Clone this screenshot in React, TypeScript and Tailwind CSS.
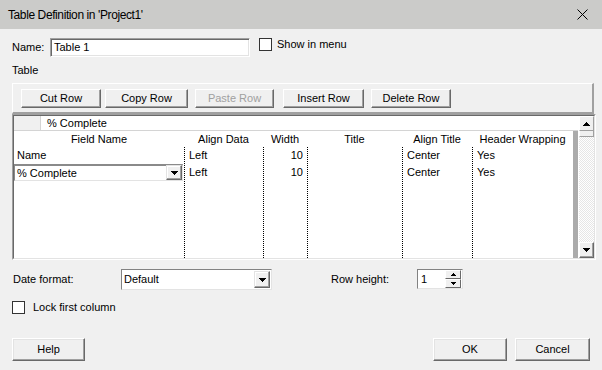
import React from "react";

const F = { fontFamily: '"Liberation Sans", Arial, sans-serif' };

const Tri = ({ up = false }: { up?: boolean }) => (
  <svg width="7" height="4" viewBox="0 0 7 4" shapeRendering="crispEdges" style={up ? { transform: "scaleY(-1)" } : undefined}>
    <path d="M0 0h7v1H0z M1 1h5v1H1z M2 2h3v1H2z M3 3h1v1H3z" fill="#000" />
  </svg>
);

const SmallTri = ({ up = false }: { up?: boolean }) => (
  <svg width="5" height="3" viewBox="0 0 5 3" shapeRendering="crispEdges" style={up ? { transform: "scaleY(-1)" } : undefined}>
    <path d="M0 0h5v1H0z M1 1h3v1H1z M2 2h1v1H2z" fill="#000" />
  </svg>
);

const ToolBtn = ({ label, w, ml, disabled = false }: { label: string; w: string; ml: string; disabled?: boolean }) => (
  <div
    className={`${w} ${ml} h-[19px] flex items-center justify-center bg-[#f0f0f0] border-t border-l border-t-white border-l-white border-r border-b border-r-[#696969] border-b-[#696969] shadow-[inset_-1px_-1px_0_#a0a0a0] ${disabled ? "text-[#a0a0a0]" : "text-black"}`}
  >
    {label}
  </div>
);

const DlgBtn = ({ label, cls }: { label: string; cls: string }) => (
  <div
    className={`${cls} h-[23px] flex items-center justify-center bg-[#f0f0f0] border-t border-l border-t-white border-l-white border-r border-b border-r-[#696969] border-b-[#696969] shadow-[inset_-1px_-1px_0_#a0a0a0,inset_1px_1px_0_#e3e3e3]`}
  >
    {label}
  </div>
);

const DropBtn = ({ cls }: { cls: string }) => (
  <div
    className={`${cls} flex items-center justify-center bg-[#f0f0f0] border-t border-l border-t-[#e3e3e3] border-l-[#e3e3e3] border-r border-b border-r-[#696969] border-b-[#696969] shadow-[inset_-1px_-1px_0_#a0a0a0,inset_1px_1px_0_#fff]`}
  >
    <Tri />
  </div>
);

export default function App() {
  return (
    <div className="w-[602px] h-[370px] bg-[#f0f0f0] flex flex-col overflow-hidden text-[11px] text-black" style={F}>
      {/* Title bar */}
      <div className="h-[29px] bg-[#cbcbc9] flex items-center justify-between pl-[8px] pr-[14px] shrink-0">
        <span className="text-[12px] tracking-[-0.4px]">Table Definition in 'Project1'</span>
        <svg width="11" height="11" viewBox="0 0 11 11">
          <path d="M0.5 0.5L10.5 10.5M10.5 0.5L0.5 10.5" stroke="#000" strokeWidth="1" />
        </svg>
      </div>

      <div className="flex flex-col px-3">
        {/* Name row */}
        <div className="mt-[9px] h-[19px] flex items-start">
          <div className="w-[38px] h-[19px] flex items-center">Name:</div>
          <div className="w-[200px] h-[19px] bg-white border-t border-l border-t-[#a0a0a0] border-l-[#a0a0a0] border-r border-b border-r-white border-b-white shadow-[inset_1px_1px_0_#696969,inset_-1px_-1px_0_#e3e3e3] flex items-center pl-[3px]">
            Table 1
          </div>
          <div className="ml-[9px] flex items-center h-[13px]">
            <div className="w-[13px] h-[13px] bg-white border border-[#333]" />
            <span className="ml-[5px]">Show in menu</span>
          </div>
        </div>

        {/* Table label */}
        <div className="mt-[7px] h-[13px] leading-[13px]">Table</div>

        {/* Table group */}
        <div className="mt-[6px] w-[584px] flex flex-col">
          {/* Toolbar */}
          <div className="w-[582px] h-[31px] bg-[#f0f0f0] border-t border-l border-t-white border-l-white border-r-2 border-b-2 border-r-[#a0a0a0] border-b-[#a0a0a0] flex items-start pt-[5px]">
            <ToolBtn label="Cut Row" w="w-[80px]" ml="ml-[8px]" />
            <ToolBtn label="Copy Row" w="w-[83px]" ml="ml-[4px]" />
            <ToolBtn label="Paste Row" w="w-[79px]" ml="ml-[7px]" disabled />
            <ToolBtn label="Insert Row" w="w-[81px]" ml="ml-[9px]" />
            <ToolBtn label="Delete Row" w="w-[80px]" ml="ml-[7px]" />
          </div>

          {/* Grid */}
          <div className="h-[146px] border border-t-[#a0a0a0] border-l-[#a0a0a0] border-r-white border-b-white">
            <div className="h-full border border-t-[#696969] border-l-[#696969] border-r-[#e3e3e3] border-b-[#e3e3e3] flex">
              <div className="w-[564px] flex flex-col">
                {/* Edit row */}
                <div className="h-[15px] flex bg-white border-b border-b-[#d4d4d4]">
                  <div className="w-[27px] bg-[#f0f0f0] border-r border-r-[#d4d4d4]" />
                  <div className="pl-[6px] leading-[14px]">% Complete</div>
                </div>
                <div className="flex-1 flex">
                  <div className="w-[559px] bg-white flex flex-col">
                    {/* Header */}
                    <div className="h-[16px] grid grid-cols-[170px_79px_44px_95px_70px_101px] leading-[16px] text-center">
                      <div>Field Name</div>
                      <div>Align Data</div>
                      <div>Width</div>
                      <div>Title</div>
                      <div>Align Title</div>
                      <div>Header Wrapping</div>
                    </div>
                    {/* Body */}
                    <div className="flex-1 flex">
                      <div className="w-[170px] flex flex-col">
                        <div className="h-[17px] leading-[17px] pl-[3px]">Name</div>
                        <div className="h-[17px] w-[169px] bg-white border-t-2 border-l border-t-[#8a8a8a] border-l-[#8a8a8a] border-r border-b border-r-[#e3e3e3] border-b-[#e3e3e3] flex items-center justify-between">
                          <span className="pl-[2px]">% Complete</span>
                          <DropBtn cls="w-[16px] h-[15px] mb-[1px]" />
                        </div>
                      </div>
                      <div className="w-[79px] border-l border-dotted border-black flex flex-col">
                        <div className="h-[17px] leading-[17px] pl-[4px]">Left</div>
                        <div className="h-[17px] leading-[17px] pl-[4px]">Left</div>
                      </div>
                      <div className="w-[44px] border-l border-dotted border-black flex flex-col text-right">
                        <div className="h-[17px] leading-[17px] pr-[4px]">10</div>
                        <div className="h-[17px] leading-[17px] pr-[4px]">10</div>
                      </div>
                      <div className="w-[95px] border-l border-dotted border-black" />
                      <div className="w-[70px] border-l border-dotted border-black flex flex-col">
                        <div className="h-[17px] leading-[17px] pl-[4px]">Center</div>
                        <div className="h-[17px] leading-[17px] pl-[4px]">Center</div>
                      </div>
                      <div className="flex-1 border-l border-dotted border-black flex flex-col">
                        <div className="h-[17px] leading-[17px] pl-[4px]">Yes</div>
                        <div className="h-[17px] leading-[17px] pl-[4px]">Yes</div>
                      </div>
                    </div>
                  </div>
                  <div className="w-[5px] bg-[#ababab]" />
                </div>
              </div>
              {/* Scrollbar */}
              <div className="w-[16px] flex flex-col bg-[conic-gradient(#e6e6e6_25%,#ffffff_0_50%,#e6e6e6_0_75%,#ffffff_0)] bg-[length:2px_2px] border-l border-l-white">
                <div className="h-[15px] flex items-center justify-center bg-[#f0f0f0] border-t border-l border-t-white border-l-white border-r border-b border-r-[#a0a0a0] border-b-[#a0a0a0]">
                  <Tri up />
                </div>
                <div className="h-[6px] bg-[#f0f0f0] border-r border-b border-r-[#a0a0a0] border-b-[#a0a0a0] border-l border-l-white" />
                <div className="flex-1" />
                <div className="h-[16px] flex items-center justify-center bg-[#f0f0f0] border-t border-l border-t-white border-l-white border-r border-b border-r-[#696969] border-b-[#696969] shadow-[inset_-1px_-1px_0_#a0a0a0]">
                  <Tri />
                </div>
              </div>
            </div>
          </div>
        </div>

        {/* Date format row */}
        <div className="mt-[9px] h-[21px] flex items-center">
          <div className="w-[109px] pl-[1px]">Date format:</div>
          <div className="w-[151px] h-[21px] bg-white border border-t-[#828282] border-l-[#828282] border-r-[#e3e3e3] border-b-[#e3e3e3] flex items-center justify-between pl-[2px] pr-[1px]">
            <span>Default</span>
            <DropBtn cls="w-[16px] h-[17px]" />
          </div>
          <div className="ml-[59px] w-[86px]">Row height:</div>
          <div className="w-[46px] h-[20px] self-start bg-white border border-t-[#828282] border-l-[#828282] border-r-[#e3e3e3] border-b-[#e3e3e3] flex items-center justify-between pl-[3px] pr-[1px]">
            <span>1</span>
            <div className="flex flex-col">
              <div className="w-[16px] h-[9px] flex items-center justify-center bg-[#f0f0f0] border-t border-l border-t-white border-l-white border-r border-b border-r-[#696969] border-b-[#696969]">
                <SmallTri up />
              </div>
              <div className="w-[16px] h-[9px] flex items-center justify-center bg-[#f0f0f0] border-t border-l border-t-white border-l-white border-r border-b border-r-[#696969] border-b-[#696969]">
                <SmallTri />
              </div>
            </div>
          </div>
        </div>

        {/* Lock first column */}
        <div className="mt-[11px] h-[13px] flex items-center">
          <div className="w-[13px] h-[13px] bg-white border border-[#333]" />
          <span className="ml-[8px]">Lock first column</span>
        </div>

        {/* Buttons */}
        <div className="mt-[24px] flex">
          <DlgBtn label="Help" cls="w-[73px]" />
          <DlgBtn label="OK" cls="w-[74px] ml-auto" />
          <DlgBtn label="Cancel" cls="w-[75px] ml-[8px]" />
        </div>
      </div>
    </div>
  );
}
